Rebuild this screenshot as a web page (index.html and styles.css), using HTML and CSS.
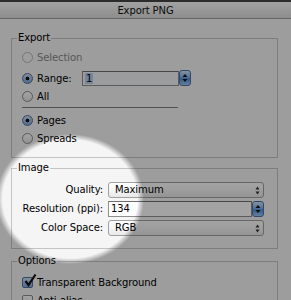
FILE: index.html
```html
<!DOCTYPE html>
<html lang="en">
<head>
  <meta charset="UTF-8" />
  <title>Export PNG</title>
  <link rel="stylesheet" href="styles.css">
</head>
<body>

<div class="titlebar">Export PNG</div>

<div class="dialog">
  <!-- Export -->
  <fieldset class="group export">
    <legend>Export</legend>
    <div class="row disabled"><span class="radio"></span>Selection</div>
    <div class="row range-row">
      <span class="radio on"></span><span class="range-label">Range:</span>
      <span class="field range"><span class="sel">1</span></span>
      <span class="stepper">
        <svg width="6" height="10" viewBox="0 0 6 10"><path d="M3 1 L5.5 4 H0.5 Z M3 9 L5.5 6 H0.5 Z" fill="#111"/></svg>
      </span>
    </div>
    <div class="row"><span class="radio"></span>All</div>
    <hr class="sep">
    <div class="row"><span class="radio on"></span>Pages</div>
    <div class="row"><span class="radio"></span>Spreads</div>
  </fieldset>

  <!-- Image -->
  <fieldset class="group image">
    <legend>Image</legend>
    <div class="form">
      <span class="lbl">Quality:</span>
      <span class="select">Maximum
        <svg class="arrows" width="5" height="9" viewBox="0 0 5 9"><path d="M2.5 0.5 L4.5 3.5 H0.5 Z M2.5 8.5 L4.5 5.5 H0.5 Z" fill="#333"/></svg>
      </span>
      <span class="lbl">Resolution (ppi):</span>
      <span class="combo">
        <span class="field res">134</span>
        <span class="stepper">
          <svg width="6" height="10" viewBox="0 0 6 10"><path d="M3 1 L5.5 4 H0.5 Z M3 9 L5.5 6 H0.5 Z" fill="#111"/></svg>
        </span>
      </span>
      <span class="lbl">Color Space:</span>
      <span class="select">RGB
        <svg class="arrows" width="5" height="9" viewBox="0 0 5 9"><path d="M2.5 0.5 L4.5 3.5 H0.5 Z M2.5 8.5 L4.5 5.5 H0.5 Z" fill="#333"/></svg>
      </span>
    </div>
  </fieldset>

  <!-- Options -->
  <fieldset class="group options">
    <legend>Options</legend>
    <div class="row">
      <span class="check on">
        <svg width="14" height="15" viewBox="0 0 14 15"><path d="M2.5 8 L5.5 12 L12.5 1.5" fill="none" stroke="#111" stroke-width="2.2"/></svg>
      </span>Transparent Background
    </div>
    <div class="row"><span class="check"></span>Anti-alias</div>
  </fieldset>
</div>

<div class="spotlight"></div>

</body>
</html>
```

FILE: styles.css
```css
body {
  margin: 0;
  width: 291px;
  height: 300px;
  overflow: hidden;
  position: relative;
  background: #f5f5f5;
  font: 10px "DejaVu Sans", sans-serif;
  letter-spacing: -0.1px;
  color: #000;
}
.titlebar {
  height: 16px;
  border-top: 2px solid #444;
  border-bottom: 1px solid #a0a0a0;
  background: linear-gradient(#fdfdfd, #dcdcdc);
  text-align: center;
  line-height: 17px;
  color: #111;
}
.dialog {
  padding: 13px 13px 0 11px;
}
.group {
  margin: 0;
  padding: 0 0 0 10px;
  border: 1px solid #c4c4c4;
}
.group legend {
  margin-left: -5px;
  padding: 0 1px;
  line-height: 12px;
}
.image, .options {
  margin-top: 4px;
}
.row {
  display: flex;
  align-items: center;
  height: 18px;
  white-space: nowrap;
}
.export {
  padding-bottom: 10px;
}
.export .row:first-of-type {
  margin-top: 4px;
}
.range-row {
  margin: 3px 0 0;
}
.disabled {
  color: #8a8a8a;
}
.radio {
  width: 11px;
  height: 11px;
  box-sizing: border-box;
  border: 1px solid #8c8c8c;
  border-radius: 50%;
  background: linear-gradient(#fff, #e4e4e4);
  margin-right: 4px;
}
.disabled .radio {
  border-color: #b8b8b8;
  background: #f6f6f6;
}
.radio.on {
  border-color: #56719a;
  background: radial-gradient(circle, #111 1.6px, transparent 2.2px), linear-gradient(#c8dcf4, #7ea8de);
}
.range-label {
  width: 45px;
}
.field {
  box-sizing: border-box;
  height: 15px;
  border: 1px solid #8e8e8e;
  border-top-color: #6e6e6e;
  background: #fff;
  line-height: 13px;
  padding-left: 2px;
}
.range {
  width: 97px;
  background: #f2f4f7;
}
.sel {
  background: #b5cff0;
  padding: 0 1px;
}
.stepper {
  width: 12px;
  height: 16px;
  box-sizing: border-box;
  border: 1px solid #4a72a8;
  border-radius: 3px;
  background: linear-gradient(#cfe3f8, #7fb1ea 45%, #4c8fdc 55%, #9cc8f4);
  display: flex;
  align-items: center;
  justify-content: center;
}
.sep {
  margin: 2px 0 3px;
  width: 156px;
  border: 0;
  border-top: 1px solid #7e7e7e;
  height: 0;
}
.image {
  padding-bottom: 12px;
}
.form {
  display: grid;
  grid-template-columns: 86px 156px;
  column-gap: 5px;
  row-gap: 3px;
  margin: 8px 0 0 -5px;
  align-items: center;
}
.lbl {
  text-align: right;
  line-height: 16px;
  white-space: nowrap;
}
.select {
  height: 16px;
  box-sizing: border-box;
  border: 1px solid #a0a0a0;
  border-radius: 3px;
  background: linear-gradient(#fff, #f6f6f6 50%, #e8e8e8);
  padding: 0 3px 0 6px;
  line-height: 14px;
  display: flex;
  justify-content: space-between;
  align-items: center;
}
.combo {
  display: flex;
}
.res {
  flex: 1;
  height: 16px;
  line-height: 14px;
}
.options {
  margin-top: 6px;
  padding-bottom: 10px;
}
.options legend + .row {
  margin-top: 6px;
}
.check {
  width: 11px;
  height: 11px;
  box-sizing: border-box;
  border: 1px solid #8c8c8c;
  border-radius: 2px;
  background: linear-gradient(#fff, #e4e4e4);
  margin-right: 4px;
  position: relative;
}
.check.on {
  border-color: #56719a;
  background: linear-gradient(#c8dcf4, #7ea8de);
}
.check svg {
  position: absolute;
  left: 0;
  top: -5px;
}
.spotlight {
  position: absolute;
  inset: 0;
  pointer-events: none;
  background: radial-gradient(ellipse 74px 65px at 70px 199px, rgba(0,0,0,0) 91%, rgba(0,0,0,.36) 100%);
}
```
